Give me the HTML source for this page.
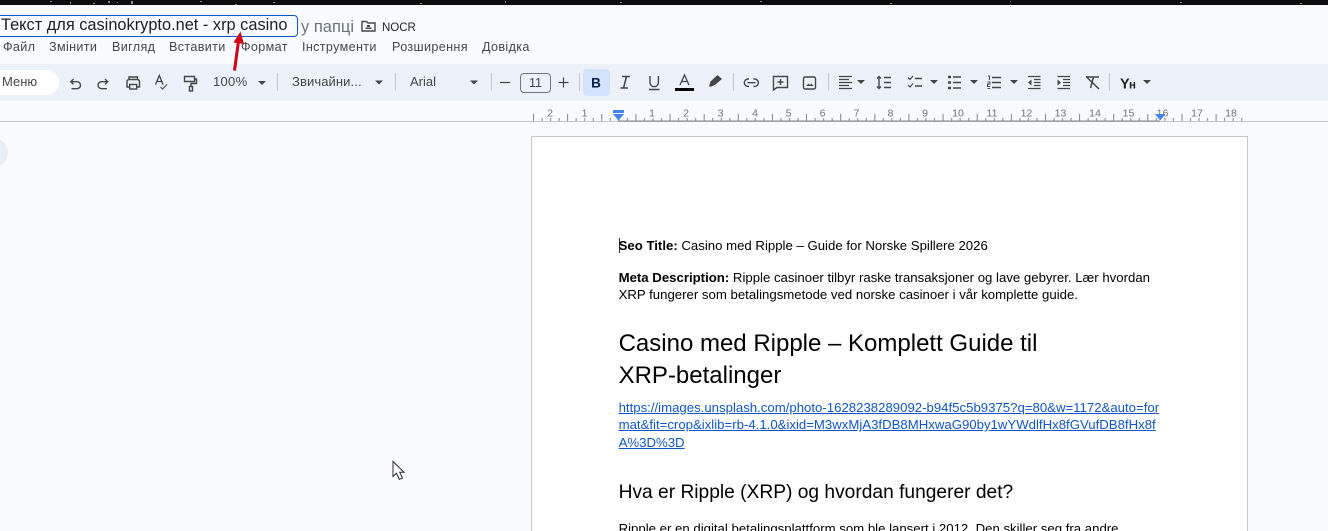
<!DOCTYPE html>
<html lang="uk"><head><meta charset="utf-8"><title>Docs</title>
<style>
html,body{margin:0;padding:0;width:1328px;height:531px;overflow:hidden;background:#f9fbfe}
body{position:relative;font-family:"Liberation Sans",sans-serif;color:#000}
.a{position:absolute;white-space:nowrap}
.m{top:39px;font-size:12.6px;line-height:16px;color:#444746;letter-spacing:.35px}
.t{font-size:13.2px;line-height:17px;left:618.6px;color:#000}
.tb{font-size:13px;line-height:16px;color:#444746;top:74px}
a{color:#1155cc;text-decoration:underline}
svg{position:absolute;left:0;top:0}
</style></head><body>
<div class="a" style="left:0;top:0;width:1328px;height:5px;background:#0d0d0d"></div>
<div class="a" style="left:0;top:64px;width:1328px;height:37px;background:#edf2fa"></div>
<div class="a" style="left:0;top:121px;width:1328px;height:1px;background:#c7c7c7"></div>
<div class="a" style="left:531px;top:136px;width:717px;height:400px;background:#fff;border:1px solid #c7c7c7;box-sizing:border-box"></div>
<div class="a" style="left:-21px;top:138px;width:29px;height:29px;border-radius:50%;background:#e9eef6"></div>

<div class="a" style="left:-6px;top:15px;width:304px;height:22px;box-sizing:border-box;border:1px solid #0b57d0;border-radius:4px"></div>
<div class="a" style="left:1px;top:15px;font-size:16.38px;line-height:21px;color:#1f1f1f">Текст для casinokrypto.net - xrp casino</div>
<div class="a" style="left:301px;top:17px;font-size:16.5px;line-height:21px;color:#6b7280">у папці</div>
<div class="a" style="left:382px;top:20px;font-size:11.5px;line-height:16px;color:#1f1f1f">NOCR</div>

<div class="a m" style="left:3px">Файл</div>
<div class="a m" style="left:49px">Змінити</div>
<div class="a m" style="left:112px">Вигляд</div>
<div class="a m" style="left:169px">Вставити</div>
<div class="a m" style="left:241px">Формат</div>
<div class="a m" style="left:302px">Інструменти</div>
<div class="a m" style="left:392px">Розширення</div>
<div class="a m" style="left:482px">Довідка</div>

<div class="a" style="left:-10px;top:70px;width:69px;height:25px;border-radius:13px;background:#fff"></div>
<div class="a tb" style="left:2px">Меню</div>
<div class="a tb" style="left:213px;letter-spacing:.3px">100%</div>
<div class="a tb" style="left:292px;letter-spacing:.1px">Звичайни...</div>
<div class="a tb" style="left:410px">Arial</div>
<div class="a" style="left:520px;top:73px;width:31px;height:20px;box-sizing:border-box;border:1px solid #747775;border-radius:4px;font-size:12.5px;line-height:18px;text-align:center;color:#444746">11</div>
<div class="a" style="left:583px;top:69px;width:27px;height:27px;border-radius:4px;background:#d3e3fd"></div>

<svg width="1328" height="531" viewBox="0 0 1328 531" fill="none">
<defs>
<pattern id="tall" x="533" y="114" width="34.13" height="7" patternUnits="userSpaceOnUse"><rect x="0" y="0" width="1" height="7" fill="#80868b"/><rect x="8.53" y="4" width="1" height="3" fill="#80868b"/><rect x="17.06" y="4" width="1" height="3" fill="#80868b"/><rect x="25.6" y="4" width="1" height="3" fill="#80868b"/></pattern>
</defs>
<!-- top noise -->
<g fill="#8d8d8d"><rect x="50" y="1" width="2" height="1"/><rect x="70" y="2" width="1" height="2"/><rect x="93" y="3" width="2" height="1"/><rect x="108" y="1" width="2" height="2"/><rect x="117" y="2" width="1" height="1"/><rect x="131" y="1" width="2" height="3"/><rect x="200" y="1" width="2" height="1"/><rect x="235" y="4" width="2" height="1"/><rect x="273" y="2" width="2" height="1"/><rect x="420" y="3" width="2" height="1"/><rect x="505" y="1" width="1" height="2"/><rect x="620" y="2" width="2" height="1"/><rect x="760" y="1" width="2" height="1"/><rect x="890" y="3" width="2" height="1"/><rect x="1010" y="1" width="1" height="1"/><rect x="1180" y="2" width="2" height="1"/><rect x="1300" y="3" width="2" height="1"/></g>
<!-- folder -->
<path d="M362 21.500h4.500l1.500 1.500h7v8h-13z" stroke="#444746" stroke-width="1.400"/><rect x="367" y="25" width="3" height="2" fill="#444746"/><rect x="365.500" y="27.500" width="6" height="1.500" fill="#444746"/>
<!-- ruler -->
<rect x="533" y="114" width="716" height="7" fill="url(#tall)"/>
<rect x="618" y="120.500" width="542" height="1" fill="#80868b"/>
<g font-family="Liberation Sans,sans-serif" font-size="10.500" fill="#6d7175" text-anchor="middle">
<text x="550" y="116.500">2</text><text x="584.500" y="116.500">1</text><text x="652" y="116.500">1</text><text x="686" y="116.500">2</text><text x="720.500" y="116.500">3</text><text x="755" y="116.500">4</text><text x="788.500" y="116.500">5</text><text x="822.500" y="116.500">6</text><text x="856.500" y="116.500">7</text><text x="890.500" y="116.500">8</text><text x="925" y="116.500">9</text><text x="958" y="116.500">10</text><text x="992" y="116.500">11</text><text x="1026.500" y="116.500">12</text><text x="1060.500" y="116.500">13</text><text x="1095" y="116.500">14</text><text x="1128.500" y="116.500">15</text><text x="1162.500" y="116.500">16</text><text x="1197" y="116.500">17</text><text x="1231" y="116.500">18</text>
</g>
<rect x="613" y="110" width="11" height="3" fill="#4285f4"/><path d="M613 114h11l-5.500 6.500z" fill="#4285f4"/><path d="M1155 114h10.500l-5.250 6.500z" fill="#4285f4"/>
<!-- separators -->
<g fill="#c7c7c7"><rect x="277" y="73" width="1" height="18"/><rect x="395" y="73" width="1" height="18"/><rect x="491" y="73" width="1" height="18"/><rect x="579" y="73" width="1" height="18"/><rect x="733" y="73" width="1" height="18"/><rect x="828" y="73" width="1" height="18"/><rect x="1109" y="73" width="1" height="18"/></g>
<!-- carets -->
<g fill="#444746"><path d="M258 81h8l-4 4z"/><path d="M375 80.500h8l-4 4z"/><path d="M470 80.500h8l-4 4z"/><path d="M857 80h8l-4 4z"/><path d="M930 80h8l-4 4z"/><path d="M970 80h8l-4 4z"/><path d="M1010 80h8l-4 4z"/><path d="M1143 80h8l-4 4z"/></g>
<g stroke="#444746" stroke-width="1.400">
<!-- undo/redo -->
<path d="M73.500 79L70.800 81.700 73.500 84.400M71 81.700H77a3.500 3.500 0 0 1 0 7H71.500"/>
<path d="M105 79L107.700 81.700 105 84.400M107.500 81.700H101.500a3.500 3.500 0 0 0 0 7H107"/>
<!-- print -->
<path d="M129 79.500V77H137.500V79.500M129.500 87H127V81.500a2 2 0 0 1 2-2H137.500a2 2 0 0 1 2 2V87H137"/><rect x="129.700" y="84.500" width="7" height="4.500"/>
<!-- spell -->
<path d="M155.500 84.500L159.300 75.500 163 84.500M156.800 81.500H161.800" stroke-width="1.300"/><path d="M160.500 87L162.500 89 167 84.500" stroke-width="1.100"/>
<!-- paint -->
<path d="M184.500 76.500H194.500V81.500H184.500zM194.500 79H196.500V83.500H191V86.500"/><rect x="189.500" y="86.500" width="3" height="4.500"/>
<!-- minus plus -->
<path d="M500 82.500H510M558.500 82.500H568.500M563.500 77.500V87.500" stroke-width="1.200"/>
<!-- italics -->
<path d="M622 76.500H630M620.500 88H628M626.500 76.500L623.500 88" stroke-width="1.500"/>
<!-- underline -->
<path d="M650 76V82.500a4.200 4.200 0 0 0 8.400 0V76M649 89.500H659.500"/>
<!-- text colour -->
<path d="M680 85L684.500 75 689 85M681.500 81.500H687.500" stroke-width="1.300"/>
<!-- link -->
<path d="M749 79H748a3.700 3.700 0 0 0 0 7.400H749M753.500 79H754.700a3.700 3.700 0 0 1 0 7.400H753.500M747.500 82.700H755.500" stroke-width="1.400"/>
<!-- comment -->
<path d="M773.500 76.500H787.500V87.500H777L773.500 90z"/><path d="M780.500 79V85M777.500 82H783.500"/>
<!-- image -->
<rect x="803.500" y="77" width="12" height="12" rx="1.500"/>
</g>
<path d="M806 86L808.500 83.500 810 85 811.500 83.500 813.500 86z" fill="#444746"/>
<rect x="675" y="88" width="19" height="3" fill="#000"/>
<path d="M709 86.500L710.500 81.500 717.500 75 722 79 715.500 84.500 711.500 86.500z" fill="#444746"/>
<text x="596" y="87.500" font-family="Liberation Sans,sans-serif" font-weight="700" font-size="13.500" fill="#041e49" text-anchor="middle">B</text>
<g stroke="#444746" stroke-width="1.300">
<!-- align -->
<path d="M839 76.500H852M839 79.500H849M839 82.500H852M839 85.500H849M839 88.500H852"/>
<!-- line spacing -->
<path d="M877 78.500L879 76.500 881 78.500M877 86.500L879 88.500 881 86.500M879 77V88" stroke-width="1.400"/><path d="M884 77.500H891M884 82.500H891M884 87.500H891" stroke-width="1.500"/>
<!-- checklist -->
<path d="M908 77.500L910 79.500 913 76M908 85L910 87 913 83.500" stroke-width="1.200"/><path d="M915 78.500H922M915 86H922" stroke-width="1.500"/>
<!-- bullets -->
<path d="M948 77H951M948 82.500H951M948 88H951" stroke-width="2.500"/><path d="M953 77H961M953 82.500H961M953 88H961" stroke-width="1.500"/>
<!-- numbered -->
<path d="M988 76H989.500V80M987.500 82H990V84H987.500V86.500H990M987.500 88.500H990" stroke-width="1"/><path d="M992 77.500H1001M992 82.500H1001M992 87.500H1001" stroke-width="1.500"/>
<!-- indent -->
<path d="M1028 76.500H1040.500M1034 79.500H1040.500M1034 82.500H1040.500M1034 85.500H1040.500M1028 88.500H1040.500"/><path d="M1031.500 79.500L1028 82.500 1031.500 85.500z" fill="#444746" stroke="none"/>
<path d="M1057.500 76.500H1070M1063 79.500H1070M1063 82.500H1070M1063 85.500H1070M1057.500 88.500H1070"/><path d="M1057.500 79.500L1061 82.500 1057.500 85.500z" fill="#444746" stroke="none"/>
<!-- clear -->
<path d="M1086 77H1099M1093.500 77L1090.500 88M1086 76.500L1099 89" stroke-width="1.500"/>
</g>
<text x="1120" y="88.500" font-family="Liberation Sans,sans-serif" font-weight="700" font-size="14.500" fill="#202124">Y</text><text x="1129" y="88.500" font-family="Liberation Sans,sans-serif" font-weight="700" font-size="11.500" fill="#202124">н</text>
<!-- red arrow -->
<path d="M234.500 70.500L238.500 41" stroke="#d50012" stroke-width="3"/><path d="M240.500 31.500L244 44 233.500 42.500z" fill="#d50012"/>
<!-- mouse cursor -->
<path d="M393 461.500V476.500L396.500 473.200 399.300 479.300 402.500 478 399.700 472.300H404z" fill="#fff" stroke="#2a2a35" stroke-width="1"/>
<!-- text cursor -->
<rect x="619" y="238" width="1" height="15" fill="#333"/>
</svg>

<div class="a t" style="top:237px"><b>Seo Title:</b> Casino med Ripple – Guide for Norske Spillere 2026</div>
<div class="a t" style="top:269px"><b>Meta Description:</b> Ripple casinoer tilbyr raske transaksjoner og lave gebyrer. Lær hvordan</div>
<div class="a t" style="top:286px">XRP fungerer som betalingsmetode ved norske casinoer i vår komplette guide.</div>
<div class="a" style="left:618.600px;top:328px;font-size:24px;line-height:32px">Casino med Ripple – Komplett Guide til</div>
<div class="a" style="left:618.600px;top:360px;font-size:24px;line-height:32px">XRP-betalinger</div>
<div class="a t" style="top:399px"><a>https://images.unsplash.com/photo-1628238289092-b94f5c5b9375?q=80&amp;w=1172&amp;auto=for</a></div>
<div class="a t" style="top:416px"><a>mat&amp;fit=crop&amp;ixlib=rb-4.1.0&amp;ixid=M3wxMjA3fDB8MHxwaG90by1wYWdlfHx8fGVufDB8fHx8f</a></div>
<div class="a t" style="top:434px"><a>A%3D%3D</a></div>
<div class="a" style="left:618.600px;top:480px;font-size:19.200px;line-height:25px;color:#000">Hva er Ripple (XRP) og hvordan fungerer det?</div>
<div class="a t" style="top:520px">Ripple er en digital betalingsplattform som ble lansert i 2012. Den skiller seg fra andre</div>
</body></html>
